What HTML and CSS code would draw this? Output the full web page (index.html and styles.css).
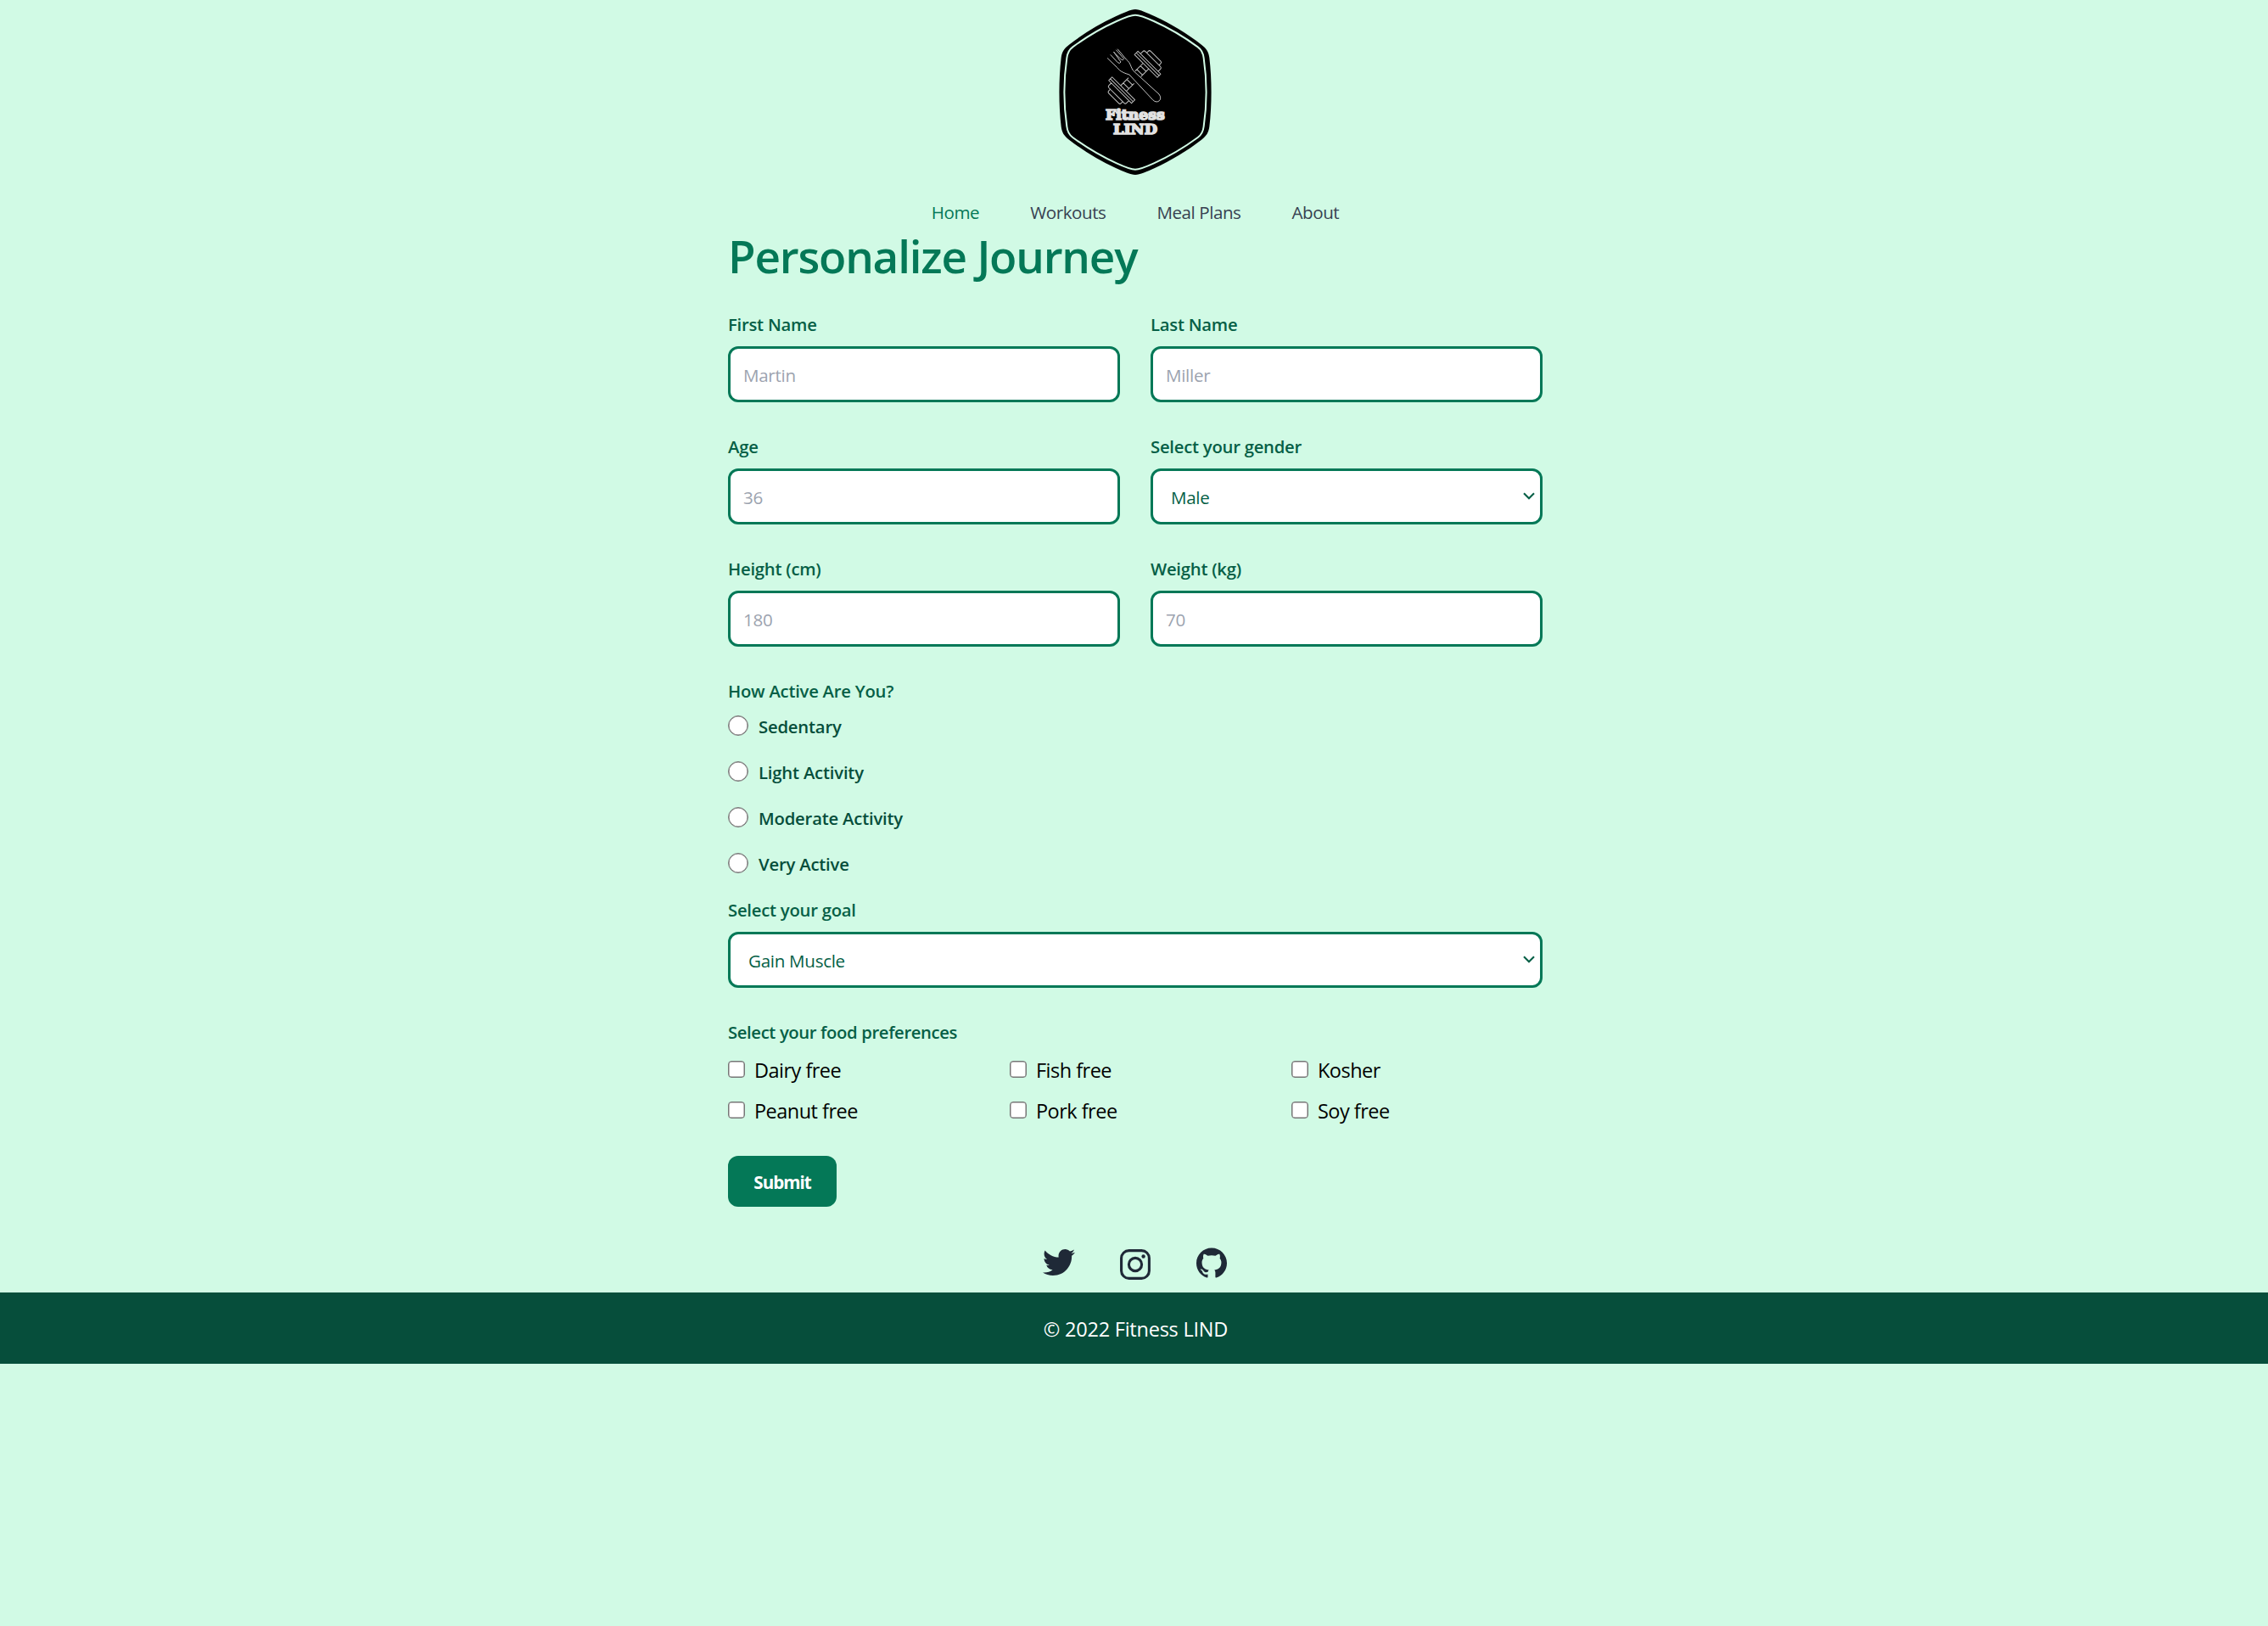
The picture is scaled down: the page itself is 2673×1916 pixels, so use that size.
FILE: index.html
```html
<!DOCTYPE html>
<html lang="en">
<head>
<meta charset="utf-8">
<title>Fitness LIND</title>
<link rel="stylesheet" href="styles.css">
</head>
<body>
<header class="header">
  <svg class="logo" viewBox="54 24 540 600" role="img" aria-label="Fitness LIND">
    <path d="M324 33C340 33 366 46 393 58C453 86 507 119 558 158C576 172 583 182 586 204C595 280 595 372 586 448C583 470 576 480 558 494C507 533 453 566 393 594C366 606 340 618 324 618C308 618 282 606 255 594C195 566 141 533 90 494C72 480 65 470 62 448C53 372 53 280 62 204C65 182 72 172 90 158C141 119 195 86 255 58C282 46 308 33 324 33Z" fill="#000"/>
    <path d="M324 53C342 53 366 64 390 75C448 101 500 133 545 166C560 177 564 187 566 205C577 280 577 372 566 447C564 465 560 475 545 486C500 519 448 551 390 577C366 588 342 599 324 599C306 599 282 588 258 577C200 551 148 519 103 486C88 475 84 465 82 447C71 372 71 280 82 205C84 187 88 177 103 166C148 133 200 101 258 75C282 64 306 53 324 53Z" fill="none" stroke="#d1fae5" stroke-width="6"/>
    <g fill="none" stroke="#c4c4c4" stroke-width="3" stroke-linejoin="round" stroke-linecap="round">
      <g transform="translate(322 273) rotate(-45)">
        <path d="M56 -57h9v114h-9zM65 -57h8v114h-8zM73 -44h12q6 0 6 6v76q0 6-6 6h-12M91 -31h8q6 0 6 6v50q0 6-6 6h-8M56 -14h-38M56 14h-38M43 -14v28M25 -14v28"/>
        <path d="M-56 -57h-9v114h9zM-65 -57h-8v114h8zM-73 -44h-12q-6 0-6 6v76q0 6 6 6h12M-91 -31h-8q-6 0-6 6v50q0 6 6 6h8M-56 -14h38M-56 14h38M-43 -14v28M-25 -14v28"/>
      </g>
      <path d="M226 206L259 238C272 255 288 259 303 264L386 353C402 370 423 352 408 333L318 251C307 238 309 223 292 210L262 174M237 194L262 221Q269 227 273 219L248 184M248 184L274 210Q281 215 284 208L257 177" fill="#000"/>
    </g>
    <g class="logo-text">
      <text x="219" y="424" font-size="50" textLength="209" lengthAdjust="spacingAndGlyphs">Fitness</text>
      <text x="246" y="474" font-size="52" textLength="156" lengthAdjust="spacingAndGlyphs">LIND</text>
    </g>
  </svg>
  <nav class="nav">
    <a class="nav-link active">Home</a>
    <a class="nav-link">Workouts</a>
    <a class="nav-link">Meal Plans</a>
    <a class="nav-link">About</a>
  </nav>
</header>

<main class="main">
  <h1 class="title">Personalize Journey</h1>
  <form>
    <div class="fields">
      <div class="field">
        <label class="label" for="first">First Name</label>
        <input class="control" id="first" type="text" placeholder="Martin">
      </div>
      <div class="field">
        <label class="label" for="last">Last Name</label>
        <input class="control" id="last" type="text" placeholder="Miller">
      </div>
      <div class="field">
        <label class="label" for="age">Age</label>
        <input class="control" id="age" type="text" placeholder="36">
      </div>
      <div class="field">
        <label class="label" for="gender">Select your gender</label>
        <div class="select-wrap">
          <select class="control select" id="gender"><option>Male</option><option>Female</option></select>
          <svg class="chevron" viewBox="0 0 14 9"><path d="M1 1.2L7 7.2L13 1.2"/></svg>
        </div>
      </div>
      <div class="field">
        <label class="label" for="height">Height (cm)</label>
        <input class="control" id="height" type="text" placeholder="180">
      </div>
      <div class="field">
        <label class="label" for="weight">Weight (kg)</label>
        <input class="control" id="weight" type="text" placeholder="70">
      </div>
    </div>

    <div class="label group-label">How Active Are You?</div>
    <div class="radios">
      <label class="radio-row"><input class="radio" type="radio" name="activity"><span>Sedentary</span></label>
      <label class="radio-row"><input class="radio" type="radio" name="activity"><span>Light Activity</span></label>
      <label class="radio-row"><input class="radio" type="radio" name="activity"><span>Moderate Activity</span></label>
      <label class="radio-row"><input class="radio" type="radio" name="activity"><span>Very Active</span></label>
    </div>

    <div class="field goal">
      <label class="label group-label" for="goal">Select your goal</label>
      <div class="select-wrap">
        <select class="control select" id="goal"><option>Gain Muscle</option><option>Lose Weight</option></select>
        <svg class="chevron" viewBox="0 0 14 9"><path d="M1 1.2L7 7.2L13 1.2"/></svg>
      </div>
    </div>

    <div class="label group-label food-label">Select your food preferences</div>
    <div class="foods">
      <label class="food"><input class="check" type="checkbox"><span>Dairy free</span></label>
      <label class="food"><input class="check" type="checkbox"><span>Fish free</span></label>
      <label class="food"><input class="check" type="checkbox"><span>Kosher</span></label>
      <label class="food"><input class="check" type="checkbox"><span>Peanut free</span></label>
      <label class="food"><input class="check" type="checkbox"><span>Pork free</span></label>
      <label class="food"><input class="check" type="checkbox"><span>Soy free</span></label>
    </div>
    <button class="submit" type="button">Submit</button>
  </form>
</main>

<div class="social">
  <svg class="twitter" viewBox="0 48 512 416" preserveAspectRatio="none"><path d="M459.37 151.716c.325 4.548.325 9.097.325 13.645 0 138.72-105.583 298.558-298.558 298.558-59.452 0-114.68-17.219-161.137-47.106 8.447.974 16.568 1.299 25.34 1.299 49.055 0 94.213-16.568 130.274-44.832-46.132-.975-84.792-31.188-98.112-72.772 6.498.974 12.995 1.624 19.818 1.624 9.421 0 18.843-1.3 27.614-3.573-48.081-9.747-84.143-51.98-84.143-102.985v-1.299c13.969 7.797 30.214 12.67 47.431 13.319-28.264-18.843-46.781-51.005-46.781-87.391 0-19.492 5.197-37.36 14.294-52.954 51.655 63.675 129.3 105.258 216.365 109.807-1.624-7.797-2.599-15.918-2.599-24.04 0-57.828 46.782-104.934 104.934-104.934 30.213 0 57.502 12.67 76.67 33.137 23.715-4.548 46.456-13.32 66.599-25.34-7.798 24.366-24.366 44.833-46.132 57.827 21.117-2.273 41.584-8.122 60.426-16.243-14.292 20.791-32.161 39.308-52.628 54.253z"/></svg>
  <svg class="instagram" viewBox="0 0 36 36"><rect x="1.6" y="1.6" width="32.8" height="32.8" rx="9"/><circle cx="18" cy="18" r="7.6"/><circle class="dot" cx="27.6" cy="8.5" r="2.2"/></svg>
  <svg class="github" viewBox="0 0 24 24"><path d="M12 .297c-6.63 0-12 5.373-12 12 0 5.303 3.438 9.8 8.205 11.385.6.113.82-.258.82-.577 0-.285-.01-1.04-.015-2.04-3.338.724-4.042-1.61-4.042-1.61C4.422 18.07 3.633 17.7 3.633 17.7c-1.087-.744.084-.729.084-.729 1.205.084 1.838 1.236 1.838 1.236 1.07 1.835 2.809 1.305 3.495.998.108-.776.417-1.305.76-1.605-2.665-.3-5.466-1.332-5.466-5.93 0-1.31.465-2.38 1.235-3.22-.135-.303-.54-1.523.105-3.176 0 0 1.005-.322 3.3 1.23.96-.267 1.98-.399 3-.405 1.02.006 2.04.138 3 .405 2.28-1.552 3.285-1.23 3.285-1.23.645 1.653.24 2.873.12 3.176.765.84 1.23 1.91 1.23 3.22 0 4.61-2.805 5.625-5.475 5.92.42.36.81 1.096.81 2.22 0 1.606-.015 2.896-.015 3.286 0 .315.21.69.825.57C20.565 22.092 24 17.592 24 12.297c0-6.627-5.373-12-12-12"/></svg>
</div>
<footer class="footer">© 2022 Fitness LIND</footer>
</body>
</html>
```
FILE: styles.css
```css
* { box-sizing: border-box; }

body {
  margin: 0;
  min-height: 100vh;
  background: #d1fae5;
  font-family: "Open Sans", "Noto Sans", sans-serif;
  font-size: 20.6px;
}

.header {
  display: flex;
  flex-direction: column;
  align-items: center;
  padding: 8px 0 0 3px;
}

.logo { display: block; width: 180px; height: 200px; }
.logo-text {
  font-family: "DejaVu Serif", serif;
  font-weight: 700;
  fill: #e2e2e2;
  stroke: #e2e2e2;
  stroke-width: 5;
}

.nav {
  display: flex;
  gap: 60px;
  margin-top: 27px;
  height: 35px;
  line-height: 30px;
  letter-spacing: -0.45px;
  color: #374151;
}
.nav-link.active { color: #047857; }

.main {
  width: 963px;
  margin: 0 auto;
  padding-left: 3px;
}

.title {
  margin: 0 0 36px;
  height: 60px;
  color: #047857;
  font-size: 53px;
  font-weight: 600;
  line-height: 64px;
  letter-spacing: -1.2px;
}

.fields {
  display: grid;
  grid-template-columns: 1fr 1fr;
  gap: 36px;
  margin-bottom: 36px;
}

.label {
  display: block;
  height: 30px;
  margin-bottom: 12px;
  color: #065f46;
  font-weight: 600;
  font-size: 20.3px;
  line-height: 32px;
  letter-spacing: -0.25px;
}
.food-label { letter-spacing: -0.38px; }

.control {
  display: block;
  appearance: none;
  width: 100%;
  height: 66px;
  margin: 0;
  padding: 2px 15px 0;
  border: 3px solid #047857;
  border-radius: 12px;
  background: #fff;
  color: #065f46;
  font: inherit;
  letter-spacing: -0.3px;
}
.control::placeholder { color: #9ca3af; opacity: 1; }

.select-wrap { position: relative; }
.select { padding-left: 21px; }
.chevron {
  position: absolute;
  top: 28px;
  right: 9px;
  width: 14px;
  height: 9px;
  fill: none;
  stroke: #065f46;
  stroke-width: 2.1;
}

.radio-row {
  display: flex;
  align-items: flex-start;
  gap: 12px;
  height: 30px;
  margin-bottom: 24px;
  color: #064e3b;
  font-weight: 600;
  font-size: 20.3px;
  line-height: 32px;
  letter-spacing: -0.2px;
}
.radio {
  appearance: none;
  width: 24px;
  height: 24px;
  margin: 3px 0 0;
  border: 1px solid #767676;
  border-radius: 50%;
  background: #fff;
  box-shadow: inset 0 0 0 0.5px #767676;
}

.goal { margin-bottom: 36px; }

.foods {
  display: grid;
  grid-template-columns: repeat(3, 1fr);
  gap: 12px 36px;
  margin-bottom: 36px;
}
.food {
  display: flex;
  align-items: flex-start;
  gap: 11px;
  height: 36px;
  color: #000;
  font-size: 23.5px;
  line-height: 38px;
  letter-spacing: -0.52px;
}
.check {
  appearance: none;
  width: 20px;
  height: 20px;
  margin: 8px 0 0;
  border: 1px solid #767676;
  border-radius: 4px;
  background: #fff;
  box-shadow: inset 0 0 0 0.5px #767676;
}

.submit {
  display: block;
  width: 128px;
  height: 60px;
  padding: 2px 0 0;
  border: 0;
  border-radius: 12px;
  background: #047857;
  color: #fff;
  font: inherit;
  font-weight: 700;
  letter-spacing: -1px;
}

.social {
  display: flex;
  justify-content: center;
  gap: 54px;
  height: 101px;
  padding: 48px 0 0 3px;
  fill: #1f2937;
}
.twitter { width: 38px; height: 31px; margin: 2px -1px 0 -1px; }
.instagram { width: 36px; height: 36px; margin-top: 2px; fill: none; stroke: #1f2937; stroke-width: 3.1; }
.instagram .dot { fill: #1f2937; stroke: none; }
.github { width: 36px; height: 36px; }

.footer {
  height: 84px;
  padding-left: 4px;
  background: #064e3b;
  color: #fff;
  font-size: 23.5px;
  line-height: 87px;
  letter-spacing: -0.23px;
  text-align: center;
}
```
